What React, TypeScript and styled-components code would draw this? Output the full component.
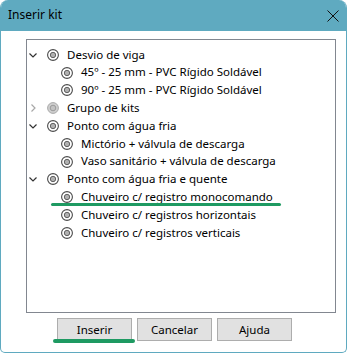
import React from "react";
import styled, { createGlobalStyle } from "styled-components";

const Global = createGlobalStyle`
  html, body { margin: 0; padding: 0; background: #ffffff; }
  body { font-family: "Noto Sans", "Open Sans", sans-serif; }
`;

const Window = styled.div`
  width: 347px;
  height: 353px;
  box-sizing: border-box;
  display: flex;
  flex-direction: column;
  background: #ffffff;
  border: 1px solid #5faac0;
  border-top: none;
  border-radius: 8px 8px 5px 5px;
  overflow: hidden;
`;

const TitleBar = styled.div`
  height: 31px;
  flex: none;
  background: #5faac0;
  display: flex;
  align-items: center;
  justify-content: space-between;
  padding: 0 7px 0 8px;
  margin: 0 -1px;
`;

const Title = styled.span`
  font-size: 12px;
  color: #000;
  line-height: 1;
  margin-top: -1px;
`;

const CloseBtn = styled.div`
  width: 14px;
  height: 14px;
  display: flex;
  align-items: center;
  justify-content: center;
`;

const Body = styled.div`
  flex: 1;
  display: flex;
  flex-direction: column;
  padding: 8px 11px 0 25px;
`;

const TreeBox = styled.div`
  width: 310px;
  height: 274px;
  box-sizing: border-box;
  border: 1px solid #828790;
  padding: 6px 0 0 0;
  display: flex;
  flex-direction: column;
`;

const Row = styled.div<{ $level: number }>`
  position: relative;
  height: 17.8px;
  display: flex;
  align-items: center;
  padding-left: ${(p) => p.$level * 14}px;
  font-size: 11.5px;
  color: #000;
  white-space: nowrap;
`;

const ChevronSlot = styled.div`
  width: 12px;
  height: 12px;
  flex: none;
  display: flex;
  align-items: center;
  justify-content: center;
  margin-right: 8px;
`;

const NodeIcon = styled.div`
  width: 12px;
  height: 12px;
  flex: none;
  display: flex;
  margin-right: 8px;
`;

const Label = styled.span`
  line-height: 1;
  margin-top: -1px;
`;

const Marker = styled.div<{ $left: number; $width: number; $top: number; $h: number }>`
  position: absolute;
  left: ${(p) => p.$left}px;
  top: ${(p) => p.$top}px;
  width: ${(p) => p.$width}px;
  height: ${(p) => p.$h}px;
  border-radius: ${(p) => p.$h}px;
  background: #1e9a62;
`;

const ButtonRow = styled.div`
  display: flex;
  gap: 5px;
  margin-top: 5px;
  padding-left: 31px;
`;

const ButtonWrap = styled.div`
  position: relative;
`;

const Button = styled.button`
  width: 75px;
  height: 23px;
  box-sizing: border-box;
  background: #e1e1e1;
  border: 1px solid #adadad;
  font-family: "Noto Sans", "Open Sans", sans-serif;
  font-size: 11.5px;
  color: #000;
  padding: 0;
  display: flex;
  align-items: center;
  justify-content: center;
  line-height: 1;
`;

const Chevron = ({ open, light }: { open: boolean; light?: boolean }) => (
  <svg width="12" height="12" viewBox="0 0 12 12">
    {open ? (
      <polyline points="2.5,4.5 6,8 9.5,4.5" fill="none" stroke="#333" strokeWidth="1.2" />
    ) : (
      <polyline points="4.5,2.5 8,6 4.5,9.5" fill="none" stroke={light ? "#a8a8a8" : "#333"} strokeWidth="1.2" />
    )}
  </svg>
);

const KitIcon = ({ disabled }: { disabled?: boolean }) => (
  <svg width="12" height="12" viewBox="0 0 12 12">
    {disabled ? (
      <>
        <circle cx="6" cy="6" r="5.4" fill="#cfcfcf" stroke="#a9a9a9" strokeWidth="1" />
        <circle cx="6" cy="6" r="2.8" fill="#c2c2c2" stroke="#959595" strokeWidth="0.9" />
      </>
    ) : (
      <>
        <circle cx="6" cy="6" r="5.4" fill="#fff" stroke="#4a4a4a" strokeWidth="1.1" />
        <circle cx="6" cy="6" r="2.7" fill="#b0b0b0" stroke="#555" strokeWidth="0.9" />
      </>
    )}
  </svg>
);

type Node = { label: string; level: number; chevron?: "open" | "closed"; disabled?: boolean; mark?: boolean };

const nodes: Node[] = [
  { label: "Desvio de viga", level: 0, chevron: "open" },
  { label: "45º - 25 mm - PVC Rígido Soldável", level: 1 },
  { label: "90º - 25 mm - PVC Rígido Soldável", level: 1 },
  { label: "Grupo de kits", level: 0, chevron: "closed", disabled: true },
  { label: "Ponto com água fria", level: 0, chevron: "open" },
  { label: "Mictório + válvula de descarga", level: 1 },
  { label: "Vaso sanitário + válvula de descarga", level: 1 },
  { label: "Ponto com água fria e quente", level: 0, chevron: "open" },
  { label: "Chuveiro c/ registro monocomando", level: 1, mark: true },
  { label: "Chuveiro c/ registros horizontais", level: 1 },
  { label: "Chuveiro c/ registros verticais", level: 1 },
];

export default function App() {
  return (
    <>
      <Global />
      <Window>
        <TitleBar>
          <Title>Inserir kit</Title>
          <CloseBtn>
            <svg width="12" height="12" viewBox="0 0 12 12">
              <path d="M0.5 0.5 L11.5 11.5 M11.5 0.5 L0.5 11.5" stroke="#111" strokeWidth="1" />
            </svg>
          </CloseBtn>
        </TitleBar>
        <Body>
          <TreeBox>
            {nodes.map((n, i) => (
              <Row key={i} $level={n.level}>
                <ChevronSlot>
                  {n.chevron && <Chevron open={n.chevron === "open"} light={n.disabled} />}
                </ChevronSlot>
                <NodeIcon>
                  <KitIcon disabled={n.disabled} />
                </NodeIcon>
                <Label>{n.label}</Label>
                {n.mark && <Marker $left={24} $width={230} $top={15} $h={3} />}
              </Row>
            ))}
          </TreeBox>
          <ButtonRow>
            <ButtonWrap>
              <Button>Inserir</Button>
              <Marker $left={-4} $width={82} $top={21} $h={4} />
            </ButtonWrap>
            <Button>Cancelar</Button>
            <Button>Ajuda</Button>
          </ButtonRow>
        </Body>
      </Window>
    </>
  );
}
